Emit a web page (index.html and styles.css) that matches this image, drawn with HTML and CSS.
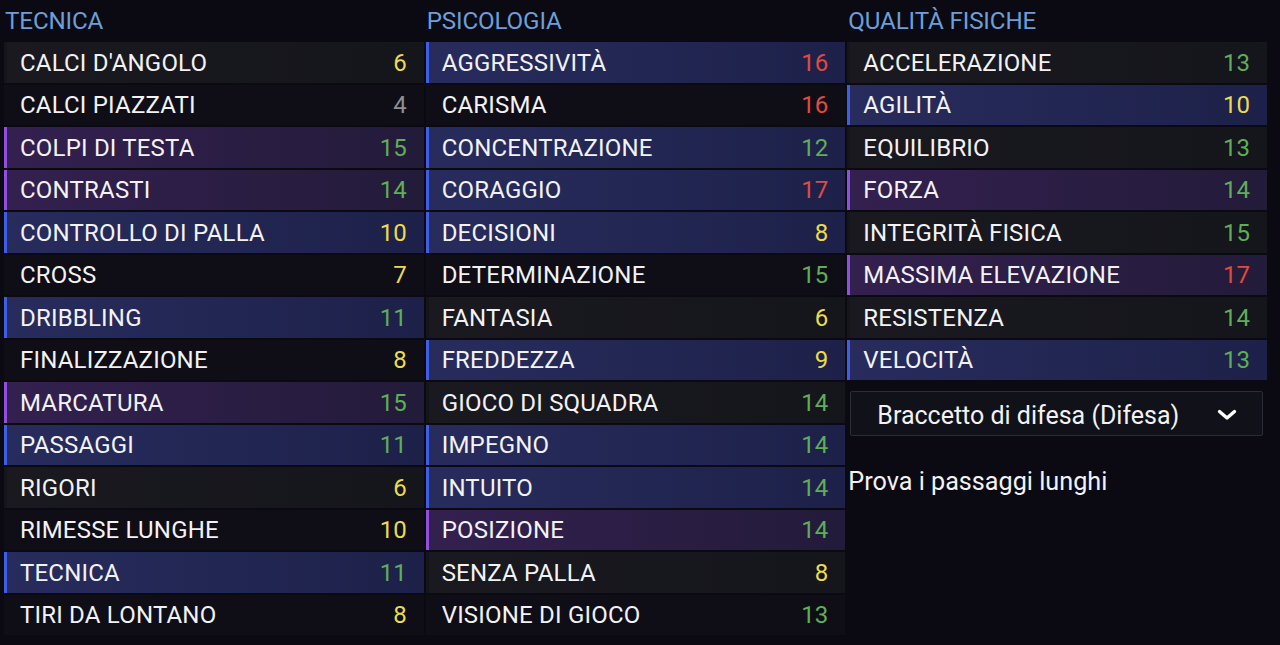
FILE: index.html
```html
<!DOCTYPE html>
<html lang="it">
<head>
<meta charset="utf-8">
<title>Attributi</title>
<link rel="stylesheet" href="styles.css">
</head>
<body>
<div class="page">
  <section class="col">
    <h2 class="col-title">TECNICA</h2>
    <ul class="rows">
      <li class="row"><span class="lbl">CALCI D'ANGOLO</span><span class="val y">6</span></li>
      <li class="row"><span class="lbl">CALCI PIAZZATI</span><span class="val g">4</span></li>
      <li class="row purple"><span class="lbl">COLPI DI TESTA</span><span class="val gr">15</span></li>
      <li class="row purple"><span class="lbl">CONTRASTI</span><span class="val gr">14</span></li>
      <li class="row blue"><span class="lbl">CONTROLLO DI PALLA</span><span class="val y">10</span></li>
      <li class="row"><span class="lbl">CROSS</span><span class="val y">7</span></li>
      <li class="row blue"><span class="lbl">DRIBBLING</span><span class="val gr">11</span></li>
      <li class="row"><span class="lbl">FINALIZZAZIONE</span><span class="val y">8</span></li>
      <li class="row purple"><span class="lbl">MARCATURA</span><span class="val gr">15</span></li>
      <li class="row blue"><span class="lbl">PASSAGGI</span><span class="val gr">11</span></li>
      <li class="row"><span class="lbl">RIGORI</span><span class="val y">6</span></li>
      <li class="row"><span class="lbl">RIMESSE LUNGHE</span><span class="val y">10</span></li>
      <li class="row blue"><span class="lbl">TECNICA</span><span class="val gr">11</span></li>
      <li class="row"><span class="lbl">TIRI DA LONTANO</span><span class="val y">8</span></li>
    </ul>
  </section>
  <section class="col">
    <h2 class="col-title">PSICOLOGIA</h2>
    <ul class="rows">
      <li class="row blue"><span class="lbl">AGGRESSIVITÀ</span><span class="val r">16</span></li>
      <li class="row"><span class="lbl">CARISMA</span><span class="val r">16</span></li>
      <li class="row blue"><span class="lbl">CONCENTRAZIONE</span><span class="val gr">12</span></li>
      <li class="row blue"><span class="lbl">CORAGGIO</span><span class="val r">17</span></li>
      <li class="row blue"><span class="lbl">DECISIONI</span><span class="val y">8</span></li>
      <li class="row"><span class="lbl">DETERMINAZIONE</span><span class="val gr">15</span></li>
      <li class="row"><span class="lbl">FANTASIA</span><span class="val y">6</span></li>
      <li class="row blue"><span class="lbl">FREDDEZZA</span><span class="val y">9</span></li>
      <li class="row"><span class="lbl">GIOCO DI SQUADRA</span><span class="val gr">14</span></li>
      <li class="row blue"><span class="lbl">IMPEGNO</span><span class="val gr">14</span></li>
      <li class="row blue"><span class="lbl">INTUITO</span><span class="val gr">14</span></li>
      <li class="row purple"><span class="lbl">POSIZIONE</span><span class="val gr">14</span></li>
      <li class="row"><span class="lbl">SENZA PALLA</span><span class="val y">8</span></li>
      <li class="row"><span class="lbl">VISIONE DI GIOCO</span><span class="val gr">13</span></li>
    </ul>
  </section>
  <section class="col">
    <h2 class="col-title">QUALITÀ FISICHE</h2>
    <ul class="rows">
      <li class="row"><span class="lbl">ACCELERAZIONE</span><span class="val gr">13</span></li>
      <li class="row blue"><span class="lbl">AGILITÀ</span><span class="val y">10</span></li>
      <li class="row"><span class="lbl">EQUILIBRIO</span><span class="val gr">13</span></li>
      <li class="row purple"><span class="lbl">FORZA</span><span class="val gr">14</span></li>
      <li class="row"><span class="lbl">INTEGRITÀ FISICA</span><span class="val gr">15</span></li>
      <li class="row purple"><span class="lbl">MASSIMA ELEVAZIONE</span><span class="val r">17</span></li>
      <li class="row"><span class="lbl">RESISTENZA</span><span class="val gr">14</span></li>
      <li class="row blue"><span class="lbl">VELOCITÀ</span><span class="val gr">13</span></li>
    </ul>
    <div class="select">
      <span class="select-text">Braccetto di difesa (Difesa)</span>
      <svg class="chev" width="20" height="12" viewBox="0 0 20 12"><polyline points="2.5,2.5 10,9 17.5,2.5" fill="none" stroke="#ffffff" stroke-width="3.4" stroke-linecap="round" stroke-linejoin="round"/></svg>
    </div>
    <p class="note">Prova i passaggi lunghi</p>
  </section>
</div>
</body>
</html>
```

FILE: styles.css
```css
* { box-sizing: border-box; }
html, body {
  margin: 0;
  padding: 0;
  background: #0b0a13;
  width: 1280px;
  height: 645px;
  overflow: hidden;
}
body {
  font-family: Roboto, "Liberation Sans", sans-serif;
  color: #f2f2f4;
}
.page {
  display: grid;
  grid-template-columns: repeat(3, 1fr);
  column-gap: 2px;
  padding: 0 13px 0 4px;
}
.col { display: flex; flex-direction: column; min-width: 0; }
.col-title {
  margin: 0;
  height: 42px;
  line-height: 42px;
  font-size: 24.2px;
  font-weight: 400;
  color: #6c9fd9;
  letter-spacing: -0.15px;
  padding-left: 1px;
}
.rows {
  list-style: none;
  margin: 0;
  padding: 0;
  display: flex;
  flex-direction: column;
  gap: 2px;
}
.row {
  height: 40.5px;
  display: flex;
  align-items: center;
  justify-content: space-between;
  padding: 1px 17px 0 13px;
  font-size: 24px;
  letter-spacing: 0.2px;
  background: #0f0e17;
  border-left: 3px solid transparent;
}
.row:nth-child(odd) { background: linear-gradient(90deg, #19191f, #15151c); }
.row.blue {
  background: linear-gradient(90deg, #272c5d, #1d2149);
  border-left-color: #3f5ee6;
}
.row.purple {
  background: linear-gradient(90deg, #33204f, #231b3a);
  border-left-color: #914fe0;
}
.lbl { white-space: nowrap; }
.val { text-align: right; letter-spacing: 0; }
.val.y { color: #ecdc4c; }
.val.g { color: #8f8f95; }
.val.gr { color: #5fae57; }
.val.r { color: #e14a40; }
.select {
  margin: 11px 4px 0 3px;
  height: 45px;
  border: 1px solid #2a2d37;
  border-radius: 2px;
  background: #111119;
  display: flex;
  align-items: center;
  justify-content: space-between;
  padding: 3px 25px 0 26px;
  font-size: 25px;
}
.select-text { white-space: nowrap; }
.chev { display: block; }
.note {
  margin: 32px 0 0 1px;
  font-size: 25.2px;
  line-height: 28px;
}
```
